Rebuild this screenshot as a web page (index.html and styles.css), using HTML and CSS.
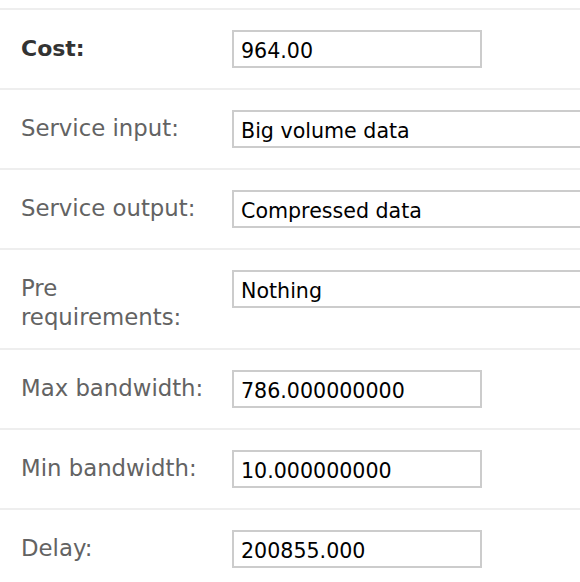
FILE: index.html
```html
<!DOCTYPE html>
<html>
<head>
<meta charset="utf-8">
<link rel="stylesheet" href="styles.css">
</head>
<body>
<div class="form">
  <div class="row">
    <div class="label strong">Cost:</div>
    <div class="field"><input class="input short" type="text" value="964.00"></div>
  </div>
  <div class="row">
    <div class="label">Service input:</div>
    <div class="field"><input class="input wide" type="text" value="Big volume data"></div>
  </div>
  <div class="row">
    <div class="label">Service output:</div>
    <div class="field"><input class="input wide" type="text" value="Compressed data"></div>
  </div>
  <div class="row">
    <div class="label">Pre requirements:</div>
    <div class="field"><input class="input wide" type="text" value="Nothing"></div>
  </div>
  <div class="row">
    <div class="label">Max bandwidth:</div>
    <div class="field"><input class="input short" type="text" value="786.000000000"></div>
  </div>
  <div class="row">
    <div class="label">Min bandwidth:</div>
    <div class="field"><input class="input short" type="text" value="10.000000000"></div>
  </div>
  <div class="row">
    <div class="label">Delay:</div>
    <div class="field"><input class="input short" type="text" value="200855.000"></div>
  </div>
</div>
</body>
</html>
```

FILE: styles.css
```css
html, body {
  margin: 0;
  padding: 0;
  background: #fff;
  overflow: hidden;
}
body {
  font-family: "DejaVu Sans", Verdana, sans-serif;
}
.form {
  padding-top: 8px;
  width: 760px;
}
.row {
  display: flex;
  align-items: flex-start;
  border-top: 2px solid #eeeeee;
  padding: 20px 0;
}
.label {
  flex: 0 0 232px;
  width: 232px;
  box-sizing: border-box;
  padding: 4px 8px 0 21px;
  margin-bottom: -4px;
  font-size: 22.8px;
  line-height: 29px;
  color: #636363;
}
.label.strong {
  font-weight: bold;
  font-size: 22px;
  color: #333;
}
.field {
  flex: 1;
}
.input {
  display: block;
  box-sizing: border-box;
  height: 38px;
  border: 2px solid #cccccc;
  padding: 3px 7px 0;
  margin: 0;
  font-family: "DejaVu Sans", Verdana, sans-serif;
  font-size: 20.6px;
  color: #000;
  background: #fff;
  outline: none;
}
.short {
  width: 250px;
}
.wide {
  width: 420px;
}
```
